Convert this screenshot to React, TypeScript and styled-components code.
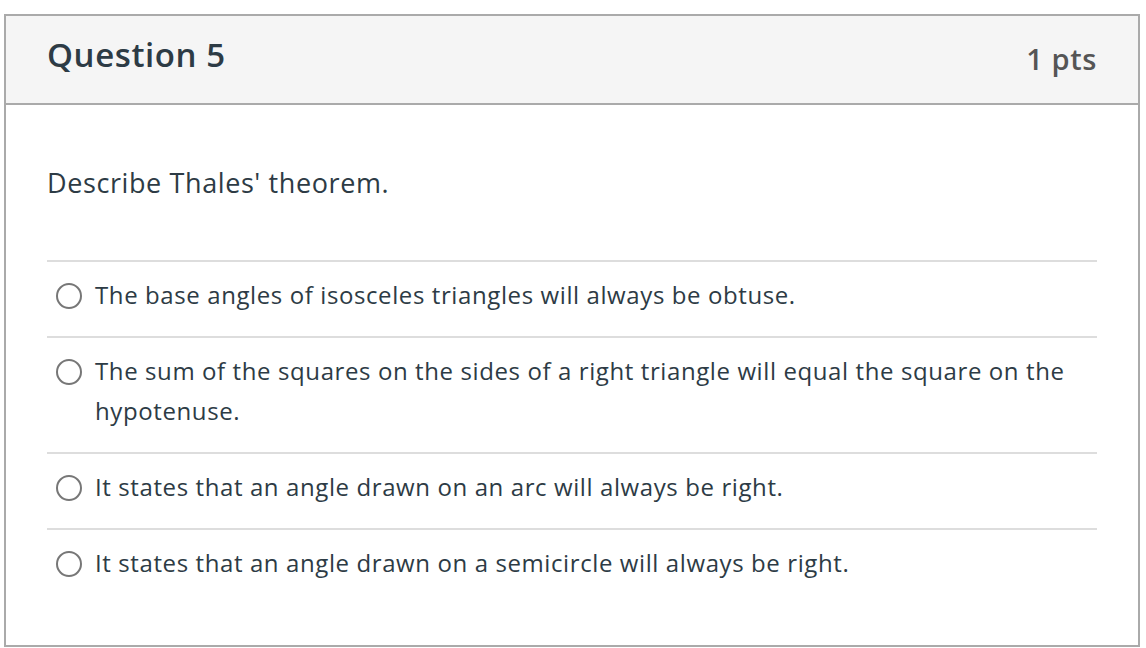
import React from "react";
import styled, { createGlobalStyle } from "styled-components";

const GlobalStyle = createGlobalStyle`
  body {
    margin: 0;
    background: #ffffff;
    font-family: "Open Sans", "Noto Sans CJK KR", sans-serif;
    letter-spacing: 0.6px;
  }
`;

const StyledPage = styled.div`
  padding: 14px 6px 2px 4px;
`;

const StyledCard = styled.div`
  border: 2px solid #aaaaaa;
  background: #ffffff;
`;

const StyledHeader = styled.div`
  display: flex;
  align-items: center;
  justify-content: space-between;
  height: 87px;
  padding: 0 41px 0 41px;
  background: #f5f5f5;
  border-bottom: 2px solid #aaaaaa;
`;

const StyledTitle = styled.h2`
  margin: 0;
  font-size: 33px;
  font-weight: 600;
  color: #2d3b45;
  padding-bottom: 10px;
`;

const StyledPoints = styled.div`
  font-size: 29px;
  font-weight: 600;
  color: #555555;
  padding-bottom: 2px;
`;

const StyledBody = styled.div`
  padding: 60px 41px 41px 41px;
`;

const StyledQuestionText = styled.p`
  margin: 0 0 59px;
  font-size: 27px;
  line-height: 36px;
  color: #2d3b45;
`;

const StyledAnswer = styled.label`
  display: flex;
  align-items: flex-start;
  gap: 13px;
  padding: 13px 0 21px 9px;
  border-top: 2px solid #dddddd;
  font-size: 24px;
  line-height: 40px;
  color: #2d3b45;
`;

const StyledRadio = styled.span`
  flex: none;
  box-sizing: border-box;
  width: 26px;
  height: 26px;
  margin-top: 8px;
  border: 2px solid #777777;
  border-radius: 50%;
`;

const answers = [
  "The base angles of isosceles triangles will always be obtuse.",
  "The sum of the squares on the sides of a right triangle will equal the square on the hypotenuse.",
  "It states that an angle drawn on an arc will always be right.",
  "It states that an angle drawn on a semicircle will always be right.",
];

const App = () => {
  return (
    <StyledPage>
      <GlobalStyle />
      <StyledCard>
        <StyledHeader>
          <StyledTitle>Question 5</StyledTitle>
          <StyledPoints>1 pts</StyledPoints>
        </StyledHeader>
        <StyledBody>
          <StyledQuestionText>Describe Thales' theorem.</StyledQuestionText>
          {answers.map((answer) => (
            <StyledAnswer key={answer}>
              <StyledRadio />
              <span>{answer}</span>
            </StyledAnswer>
          ))}
        </StyledBody>
      </StyledCard>
    </StyledPage>
  );
};

export default App;
